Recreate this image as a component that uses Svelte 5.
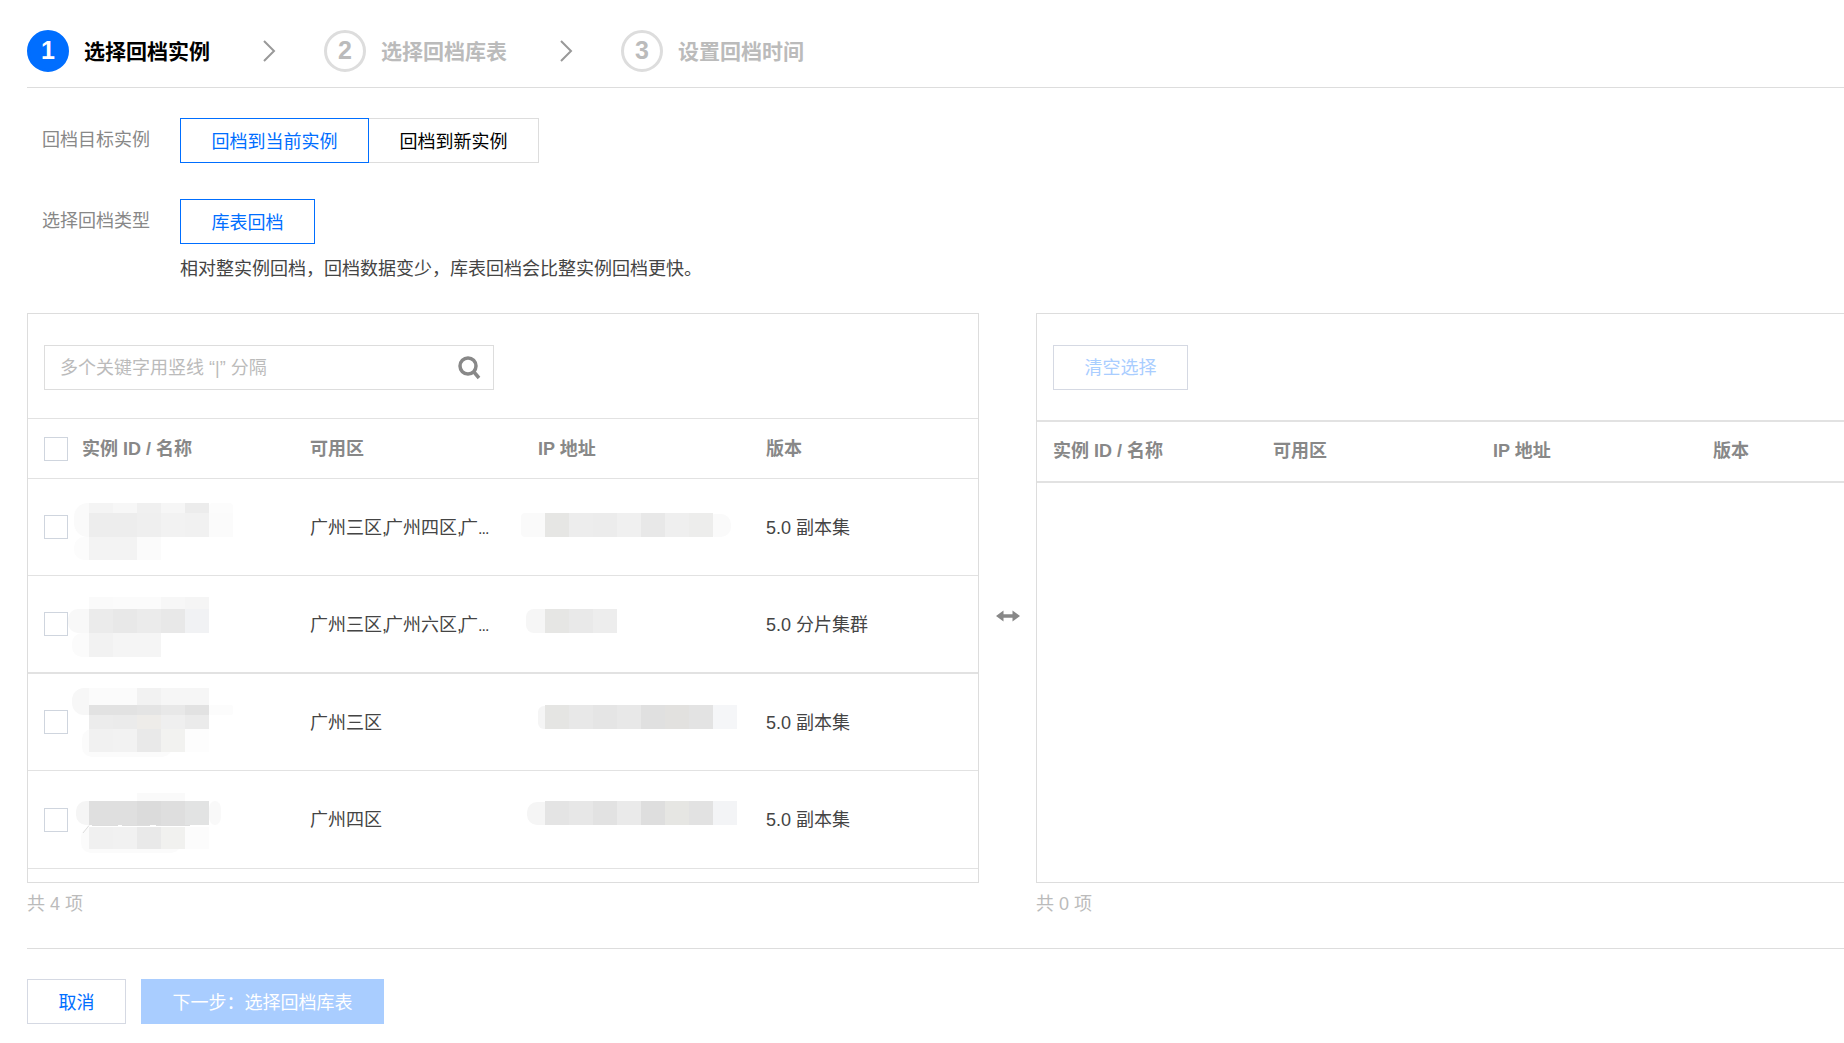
<script>
  const heads = ['实例 ID / 名称', '可用区', 'IP 地址', '版本'];
  const cell = 24;
  const strip = (x, y, h, colors, w = cell) =>
    colors.map((c, i) => ({ x: x + i * w, y, w, h, c }));
  const soft = (x, y, w, h, c, r = 10) => ({ x, y, w, h, c, r });
  const N = 89, P = 545;
  const rows = [
    {
      top: 479, h: 97, zone: ['广州三区', '广州四区', '广'], more: true, ver: '5.0 副本集', cls: '',
      rects: [
        soft(74, 503, 30, 34, '#fafafa', 14), soft(74, 537, 30, 23, '#fcfcfc', 10),
        soft(209, 503, 24, 34, '#fcfcfc', 4),
        ...strip(N, 503, 10, ['#f4f4f4', '#f7f7f7', '#f0f0f0', '#f6f6f6', '#ececec']),
        ...strip(N, 513, 24, ['#ededed', '#ededed', '#efefef', '#f2f2f2', '#f1f1f1', '#fbfbfb']),
        ...strip(N, 537, 23, ['#f3f3f3', '#f3f3f3', '#fbfbfb']),
        soft(521, 513, 30, 24, '#fafafa', 4), soft(705, 514, 26, 23, '#fafafa', 10),
        ...strip(P, 513, 24, ['#e6e6e4', '#ededed', '#ececec', '#f0f0f0', '#e8e8e8', '#efefef', '#ededec'])
      ]
    },
    {
      top: 576, h: 98, zone: ['广州三区', '广州六区', '广'], more: true, ver: '5.0 分片集群', cls: 'thick',
      rects: [
        soft(68, 609, 30, 24, '#f8f8f8', 10), soft(72, 633, 30, 24, '#fbfbfb', 10),
        ...strip(N, 597, 12, ['#fafafa', '#fbfbfb', '#fbfbfb', '#f7f7f7', '#f5f5f5']),
        ...strip(N, 609, 24, ['#ebebeb', '#e8e8e8', '#ebebeb', '#e8e8e8', '#f1f2f4']),
        ...strip(N, 633, 24, ['#f2f2f2', '#f5f5f5', '#f5f5f5']),
        soft(526, 609, 30, 24, '#f6f6f6', 8),
        ...strip(P, 609, 24, ['#e6e6e4', '#e9e9e9', '#ededed'])
      ]
    },
    {
      top: 674, h: 97, zone: ['广州三区'], more: false, ver: '5.0 副本集', cls: '',
      rects: [
        soft(72, 688, 30, 27, '#f7f7f7', 12), soft(82, 729, 90, 28, '#fbfbfb', 10),
        soft(209, 705, 24, 10, '#fcfcfc', 2),
        ...strip(N, 688, 17, ['#fbfbfb', '#fbfbfb', '#f2f2f2', '#f6f6f6', '#f6f6f6']),
        ...strip(N, 705, 10, ['#e2e2e2', '#e2e2e2', '#e4e4e4', '#e8e8e8', '#e2e2e2']),
        ...strip(N, 715, 14, ['#ececec', '#ebebeb', '#eeece9', '#efefef', '#ebebeb']),
        ...strip(N, 729, 23, ['#f1f1f1', '#f2f2f2', '#e9e9e9', '#f2f2f0', '#fdfdfd']),
        soft(538, 706, 14, 23, '#f5f5f5', 6),
        ...strip(P, 705, 24, ['#e5e5e3', '#e8e8e8', '#e5e5e5', '#e8e8e8', '#e0e0e0', '#e2e1df', '#e3e3e3', '#f5f6f8'])
      ]
    },
    {
      top: 771, h: 98, zone: ['广州四区'], more: false, ver: '5.0 副本集', cls: '', residue: true,
      rects: [
        soft(76, 801, 30, 24, '#f5f5f5', 10), soft(209, 801, 12, 24, '#f9f9f9', 8),
        soft(81, 827, 100, 26, '#fbfbfb', 10),
        soft(137, 793, 48, 8, '#fafafa', 0),
        ...strip(N, 801, 24, ['#dfdfdf', '#dfdfdf', '#dbdbdb', '#dedede', '#e2e3e3']),
        ...strip(N, 827, 22, ['#f0f0f0', '#f1f1f1', '#e9e9e9', '#f1f1ef', '#fcfcfc']),
        soft(527, 802, 30, 23, '#f5f5f5', 10),
        ...strip(P, 801, 24, ['#e4e4e4', '#e7e7e7', '#e2e2e2', '#eaeaea', '#dedede', '#e6e6e3', '#e2e2e2', '#f3f4f6'])
      ]
    }
  ];
</script>

<div class="page">
  <div class="steps">
    <div class="step on"><span class="num">1</span><span class="name">选择回档实例</span></div>
    <svg class="chev" width="14" height="24" viewBox="0 0 14 24"><path d="M2 2l10 10L2 22" /></svg>
    <div class="step"><span class="num">2</span><span class="name">选择回档库表</span></div>
    <svg class="chev" width="14" height="24" viewBox="0 0 14 24"><path d="M2 2l10 10L2 22" /></svg>
    <div class="step"><span class="num">3</span><span class="name">设置回档时间</span></div>
  </div>

  <div class="form">
    <div class="frow">
      <div class="flabel">回档目标实例</div>
      <div class="seg">
        <div class="opt sel w1">回档到当前实例</div>
        <div class="opt w2">回档到新实例</div>
      </div>
    </div>
    <div class="frow second">
      <div class="flabel">选择回档类型</div>
      <div class="seg"><div class="opt sel w3">库表回档</div></div>
    </div>
    <div class="help">相对整实例回档，回档数据变少，库表回档会比整实例回档更快。</div>
  </div>

  <div class="transfer">
    <div class="side">
      <div class="panel left">
        <div class="toolbar">
          <div class="search">
            <span class="ph">多个关键字用竖线 “|” 分隔</span>
            <svg width="24" height="24" viewBox="0 0 24 24"><circle cx="11" cy="10" r="8" /><path d="M16.5 15.5L22 22" /></svg>
          </div>
        </div>
        <div class="grid head">
          <div class="first"><span class="check"></span><span>{heads[0]}</span></div>
          <div>{heads[1]}</div><div>{heads[2]}</div><div>{heads[3]}</div>
        </div>
        {#each rows as r}
          <div class="grid row {r.cls}" style="height:{r.h}px">
            <div class="first"><span class="check"></span></div>
            <div class="zone">{#each r.zone as z, i}{#if i > 0}<span class="comma">,</span>{/if}{z}{/each}{#if r.more}<span class="dots">...</span>{/if}</div>
            <div></div>
            <div>{r.ver}</div>
            <svg class="mosaic" width="950" height={r.h} viewBox="28 {r.top} 950 {r.h}">
              {#each r.rects as q}
                <rect x={q.x} y={q.y} width={q.w} height={q.h} fill={q.c} rx={q.r || 0} />
              {/each}
              {#if r.residue}
                <path class="residue" d="M89 825.5L83 833M92 825.5H118M122 825.5H150M156 825.5H190" />
              {/if}
            </svg>
          </div>
        {/each}
      </div>
      <div class="count">共 4 项</div>
    </div>

    <div class="swap">
      <svg width="24" height="12" viewBox="0 0 24 12"><path d="M0 6L7.5 0.5V4.2H16.5V0.5L24 6L16.5 11.5V7.8H7.5V11.5Z" /></svg>
    </div>

    <div class="side">
      <div class="panel right">
        <div class="toolbar tr"><div class="clear">清空选择</div></div>
        <div class="rgrid">
          <div>{heads[0]}</div><div>{heads[1]}</div><div>{heads[2]}</div><div>{heads[3]}</div>
        </div>
      </div>
      <div class="count">共 0 项</div>
    </div>
  </div>

  <div class="footer">
    <div class="btn cancel">取消</div>
    <div class="btn next">下一步：选择回档库表</div>
  </div>
</div>

<style>
  :global(body) {
    margin: 0;
    overflow: hidden;
    background: #fff;
  }
  .page {
    width: 1844px;
    height: 1043px;
    overflow: hidden;
    padding-left: 27px;
    box-sizing: border-box;
    font-family: "Liberation Sans", "Noto Sans CJK SC", sans-serif;
    font-size: 18px;
    color: #444;
  }
  .steps {
    display: flex;
    align-items: center;
    height: 88px;
    padding-top: 14px;
    box-sizing: border-box;
    border-bottom: 1px solid #ddd;
  }
  .step {
    display: flex;
    align-items: center;
    gap: 15px;
    color: #bbb;
    font-weight: 700;
    font-size: 21px;
  }
  .num {
    width: 42px;
    height: 42px;
    border: 3px solid #ddd;
    border-radius: 50%;
    box-sizing: border-box;
    display: flex;
    align-items: center;
    justify-content: center;
    color: #bbb;
    font-size: 25px;
    font-weight: 700;
  }
  .step.on { color: #000; }
  .step.on .num {
    background: #006eff;
    border-color: #006eff;
    color: #fff;
  }
  .name { width: 126px; white-space: nowrap; padding-bottom: 2px; }
  .chev {
    margin: 0 48px 0 52px;
    fill: none;
    stroke: #999;
    stroke-width: 2;
  }
  .form { padding-top: 30px; height: 225px; box-sizing: border-box; }
  .frow { display: flex; }
  .frow.second { margin-top: 36px; }
  .flabel {
    width: 153px;
    padding-left: 15px;
    box-sizing: border-box;
    color: #888;
    line-height: 45px;
  }
  .seg { display: flex; }
  .opt {
    height: 45px;
    line-height: 46px;
    box-sizing: border-box;
    text-align: center;
    border: 1px solid #ddd;
    color: #000;
  }
  .opt.sel { border-color: #006eff; color: #006eff; position: relative; z-index: 1; }
  .w1 { width: 189px; }
  .w2 { width: 171px; margin-left: -1px; }
  .w3 { width: 135px; }
  .help { margin: 13px 0 0 153px; line-height: 24px; }

  .transfer { display: flex; align-items: flex-start; }
  .side { flex: none; }
  .panel { border: 1px solid #ddd; height: 570px; box-sizing: border-box; }
  .panel.left { width: 952px; }
  .panel.right { width: 950px; }
  .toolbar {
    height: 105px;
    padding: 31px 0 0 16px;
    box-sizing: border-box;
    border-bottom: 1px solid #e2e2e2;
  }
  .toolbar.tr { height: 108px; border-bottom: 2px solid #e2e2e2; }
  .search {
    width: 450px;
    height: 45px;
    border: 1px solid #ddd;
    box-sizing: border-box;
    display: flex;
    align-items: center;
    justify-content: space-between;
    padding: 0 12px 0 15px;
  }
  .search .ph { color: #bbb; padding-bottom: 3px; }
  .search svg { fill: none; stroke: #888; stroke-width: 3.5; }
  .clear {
    width: 135px;
    height: 45px;
    line-height: 45px;
    box-sizing: border-box;
    border: 1px solid #d5d9e3;
    color: #a9cdff;
    text-align: center;
  }
  .grid {
    position: relative;
    display: grid;
    grid-template-columns: 282px 228px 228px 1fr;
    align-items: center;
    box-sizing: border-box;
    border-bottom: 1px solid #e2e2e2;
  }
  .grid.thick { border-bottom-width: 2px; }
  .row { padding-bottom: 3px; }
  .row .check { margin-top: 3px; }
  .head {
    height: 60px;
    color: #888;
    font-weight: 700;
    padding-bottom: 4px;
  }
  .head .check { margin-top: 4px; }
  .first {
    display: flex;
    align-items: center;
    gap: 14px;
    padding-left: 16px;
  }
  .check {
    width: 24px;
    height: 24px;
    box-sizing: border-box;
    border: 1px solid #cfd5de;
    flex: none;
  }
  .zone { white-space: nowrap; }
  .comma { letter-spacing: -2px; }
  .dots { letter-spacing: -1px; font-size: 16px; }
  .mosaic {
    position: absolute;
    left: 0;
    top: 0;
    pointer-events: none;
  }
  .residue { fill: none; stroke: #ddd; stroke-width: 1; }
  .rgrid {
    display: grid;
    grid-template-columns: 220px 220px 220px 1fr;
    padding-left: 16px;
    padding-bottom: 5px;
    height: 61px;
    align-items: center;
    color: #888;
    font-weight: 700;
    border-bottom: 2px solid #e2e2e2;
    box-sizing: border-box;
  }
  .swap {
    width: 57px;
    padding-top: 297px;
    display: flex;
    justify-content: center;
    flex: none;
  }
  .swap svg { fill: #888; }
  .count {
    color: #bbb;
    line-height: 24px;
    margin-top: 9px;
  }
  .footer {
    display: flex;
    gap: 15px;
    margin-top: 32px;
    padding-top: 30px;
    border-top: 1px solid #ddd;
  }
  .btn {
    height: 45px;
    line-height: 46px;
    box-sizing: border-box;
    text-align: center;
  }
  .cancel {
    width: 99px;
    border: 1px solid #d5d9e3;
    color: #006eff;
  }
  .next {
    width: 243px;
    background: #a9cdff;
    color: #fff;
    line-height: 48px;
  }
</style>
